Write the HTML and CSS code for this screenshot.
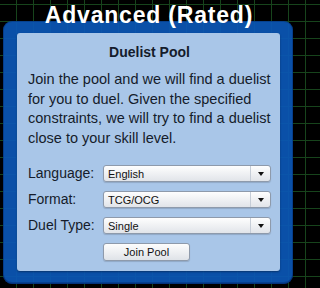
FILE: index.html
```html
<!DOCTYPE html>
<html>
<head>
<meta charset="utf-8">
<link rel="stylesheet" href="styles.css">
</head>
<body>
<div class="title">Advanced (Rated)</div>
<div class="panel">
  <div class="card">
    <h1 class="card-title">Duelist Pool</h1>
    <p class="intro">Join the pool and we will find a duelist<br>for you to duel. Given the specified<br>constraints, we will try to find a duelist<br>close to your skill level.</p>
    <div class="form">
      <div class="label">Language:</div>
      <div class="select"><span class="value">English</span><span class="caret"></span></div>
      <div class="label">Format:</div>
      <div class="select"><span class="value">TCG/OCG</span><span class="caret"></span></div>
      <div class="label">Duel Type:</div>
      <div class="select"><span class="value">Single</span><span class="caret"></span></div>
      <button class="btn">Join Pool</button>
    </div>
  </div>
</div>
</body>
</html>
```

FILE: styles.css
```css
html, body {
  margin: 0;
  padding: 0;
}
body {
  width: 298px;
  height: 288px;
  overflow: hidden;
  background-color: #000;
  background-image:
    linear-gradient(to right, #17441c 1px, transparent 1px),
    linear-gradient(to bottom, #17441c 1px, transparent 1px);
  background-size: 17px 17px;
  background-position: 16px 4px;
  font-family: "Liberation Sans", Arial, sans-serif;
  color: #151c2b;
}
.title {
  position: relative;
  z-index: 1;
  padding-top: 4px;
  height: 23px;
  margin-bottom: -6px;
  line-height: 23px;
  text-align: center;
  color: #fff;
  font-weight: bold;
  font-size: 23px;
  letter-spacing: 0.8px;
  white-space: nowrap;
}
.panel {
  margin: 0 5px 0 3px;
  height: 263px;
  box-sizing: border-box;
  padding: 12px 13px 13px 14px;
  background: rgba(11, 86, 181, 0.93);
  border-radius: 9px;
  box-shadow: inset 0 0 0 1px rgba(0, 30, 90, 0.35), inset 0 -2px 0 rgba(0, 30, 90, 0.3);
}
.card {
  height: 238px;
  box-sizing: border-box;
  padding: 10px 9px 10px 11px;
  background: #a9c6e8;
  border-radius: 3px;
  box-shadow: 0 1px 2px rgba(0, 0, 0, 0.35);
}
.card-title {
  margin: 0;
  font-size: 14px;
  line-height: 18px;
  font-weight: bold;
  text-align: center;
}
.intro {
  margin: 9px 0 0;
  font-size: 14.5px;
  line-height: 19.5px;
  white-space: nowrap;
}
.form {
  margin-top: 17px;
  display: grid;
  grid-template-columns: 75px 168px;
  grid-template-rows: 17px 17px 17px 18px;
  row-gap: 9px;
  align-items: center;
}
.label {
  font-size: 14px;
  line-height: 17px;
  white-space: nowrap;
}
.select {
  height: 17px;
  box-sizing: border-box;
  display: flex;
  align-items: center;
  border: 1px solid #8e9aab;
  border-radius: 3px;
  background: linear-gradient(#fefefe, #e1e4e9);
  box-shadow: 0 1px 1px rgba(0, 0, 0, 0.15);
  font-size: 11px;
  color: #111;
}
.value {
  flex: 1;
  padding-left: 4px;
}
.caret {
  width: 19px;
  align-self: stretch;
  border-left: 1px solid #c6cdd7;
  display: flex;
  align-items: center;
  justify-content: center;
}
.caret::after {
  content: "";
  border-left: 3.5px solid transparent;
  border-right: 3.5px solid transparent;
  border-top: 4px solid #111;
}
.btn {
  grid-column: 2;
  width: 87px;
  height: 18px;
  padding: 0;
  box-sizing: border-box;
  border: 1px solid #8e9aab;
  border-radius: 3px;
  background: linear-gradient(#fdfdfd, #dfe3e8);
  box-shadow: 0 1px 1px rgba(0, 0, 0, 0.15);
  font-family: "Liberation Sans", Arial, sans-serif;
  font-size: 11px;
  color: #111;
}
```
